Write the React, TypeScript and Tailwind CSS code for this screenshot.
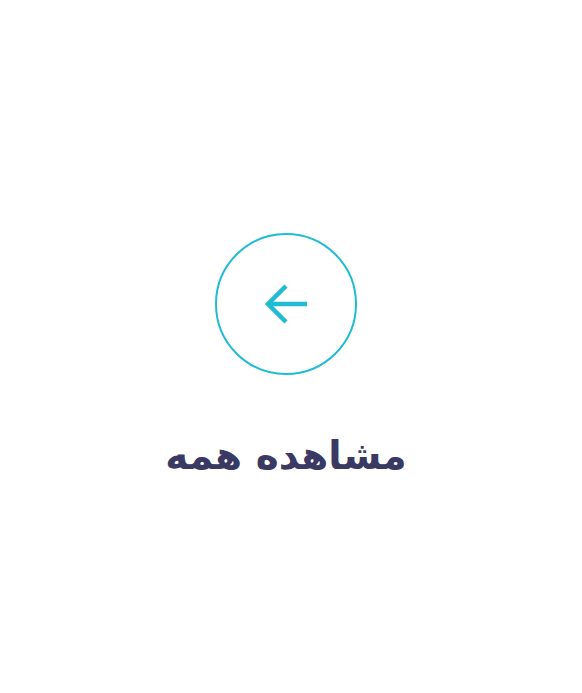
export default function App() {
  return (
    <div className="min-h-[693px] w-full bg-white flex flex-col items-center pt-[233px] pr-[10px]">
      <a
        href="#"
        className="w-[142px] h-[142px] rounded-full border-2 border-[#1fbcd4] flex items-center justify-center"
      >
        <svg width="44" height="42" viewBox="0 0 44 42" fill="none" stroke="#1fbcd4" strokeWidth="4.5" strokeLinecap="butt" strokeLinejoin="miter">
          <path d="M43 21H4" />
          <path d="M22 3L4 21L22 39" />
        </svg>
      </a>
      <div
        dir="rtl"
        className="mt-[61px] text-[#393963] font-bold text-[39px] leading-none"
        style={{ fontFamily: '"DejaVu Sans", sans-serif' }}
      >
        مشاهده همه
      </div>
    </div>
  );
}
